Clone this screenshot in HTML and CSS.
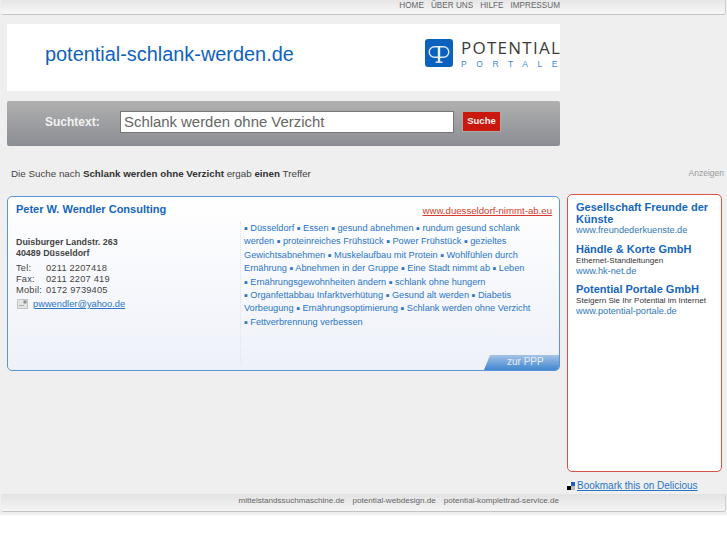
FILE: index.html
```html
<!DOCTYPE html>
<html lang="de">
<head>
<meta charset="utf-8">
<title>potential-schlank-werden.de</title>
<link rel="stylesheet" href="styles.css">
</head>
<body>
<div class="page">
  <nav class="topbar">
    <div class="topnav">
      <a href="#">HOME</a><a href="#">ÜBER UNS</a><a href="#">HILFE</a><a href="#">IMPRESSUM</a>
    </div>
  </nav>
  <div class="layout">
    <div class="main">
      <header class="brand">
        <div class="site-name">potential-schlank-werden.de</div>
        <div class="logo">
          <svg class="logo-mark" width="28" height="28" viewBox="0 0 28 28">
            <rect width="28" height="28" rx="3" fill="#0a62bd"/>
            <g fill="none" stroke="#dfe9f5" stroke-width="1.4">
              <path d="M13 7.7H9.5a5.2 5.2 0 0 0 0 10.6H13"/>
              <path d="M15 7.7h3.5a5.2 5.2 0 0 1 0 10.6H15"/>
              <path d="M10.5 23.2h7"/>
            </g>
            <rect x="12.8" y="7" width="2.4" height="16" fill="#eef3fa"/>
          </svg>
          <div class="logo-words">
            <div class="logo-top">POTENTIAL</div>
            <div class="logo-sub">PORTALE</div>
          </div>
        </div>
      </header>
      <form class="search">
        <label class="search-label">Suchtext:</label>
        <div class="search-input">Schlank werden ohne Verzicht</div>
        <div class="search-btn">Suche</div>
      </form>
      <p class="result-line">Die Suche nach <b>Schlank werden ohne Verzicht</b> ergab <b>einen</b> Treffer</p>
      <article class="card">
        <div class="card-left">
          <h2 class="card-title">Peter W. Wendler Consulting</h2>
          <div class="address"><b>Duisburger Landstr. 263<br>40489 Düsseldorf</b></div>
          <div class="contact"><span>Tel:</span><span>0211 2207418</span></div>
          <div class="contact"><span>Fax:</span><span>0211 2207 419</span></div>
          <div class="contact"><span>Mobil:</span><span>0172 9739405</span></div>
          <div class="mail">
            <svg class="mail-icon" width="11" height="10" viewBox="0 0 11 10">
              <rect x=".5" y=".5" width="10" height="9" fill="#e4e4e4" stroke="#c4c4c4"/>
              <rect x="6.5" y="1.5" width="3" height="3" fill="#8c8c8c"/>
              <rect x="2" y="6" width="5" height="1" fill="#aaa"/>
            </svg>
            <a href="#">pwwendler@yahoo.de</a>
          </div>
        </div>
        <div class="card-right">
          <div class="card-url"><a href="#">www.duesseldorf-nimmt-ab.eu</a></div>
          <div class="tags"><span class="b">▪</span> Düsseldorf <span class="b">▪</span> Essen <span class="b">▪</span> gesund abnehmen <span class="b">▪</span> rundum gesund schlank<br>werden <span class="b">▪</span> proteinreiches Frühstück <span class="b">▪</span> Power Frühstück <span class="b">▪</span> gezieltes<br>Gewichtsabnehmen <span class="b">▪</span> Muskelaufbau mit Protein <span class="b">▪</span> Wohlfühlen durch<br>Ernährung <span class="b">▪</span> Abnehmen in der Gruppe <span class="b">▪</span> Eine Stadt nimmt ab <span class="b">▪</span> Leben<br><span class="b">▪</span> Ernährungsgewohnheiten ändern <span class="b">▪</span> schlank ohne hungern<br><span class="b">▪</span> Organfettabbau Infarktverhütung <span class="b">▪</span> Gesund alt werden <span class="b">▪</span> Diabetis<br>Vorbeugung <span class="b">▪</span> Ernährungsoptimierung <span class="b">▪</span> Schlank werden ohne Verzicht<br><span class="b">▪</span> Fettverbrennung verbessen</div>
        </div>
        <a class="ppp" href="#">zur PPP</a>
      </article>
    </div>
    <aside class="side">
      <div class="ads-label">Anzeigen</div>
      <div class="ads">
        <div class="ad">
          <div class="ad-title">Gesellschaft Freunde der Künste</div>
          <div class="ad-url">www.freundederkuenste.de</div>
        </div>
        <div class="ad">
          <div class="ad-title">Händle &amp; Korte GmbH</div>
          <div class="ad-text">Ethernet-Standleitungen</div>
          <div class="ad-url">www.hk-net.de</div>
        </div>
        <div class="ad">
          <div class="ad-title">Potential Portale GmbH</div>
          <div class="ad-text">Steigern Sie Ihr Potential im Internet</div>
          <div class="ad-url">www.potential-portale.de</div>
        </div>
      </div>
      <div class="bookmark">
        <svg width="8" height="8" viewBox="0 0 8 8"><rect x="4" width="4" height="4" fill="#1a5fc4"/><rect y="4" width="4" height="4" fill="#000"/><rect x="4" y="4" width="4" height="4" fill="#bbb"/><rect width="4" height="4" fill="#fff"/></svg>
        <a href="#">Bookmark this on Delicious</a>
      </div>
    </aside>
  </div>
  <footer class="bottombar">
    <div class="bottomnav">
      <a href="#">mittelstandssuchmaschine.de</a><a href="#">potential-webdesign.de</a><a href="#">potential-komplettrad-service.de</a>
    </div>
  </footer>
</div>
</body>
</html>
```

FILE: styles.css
```css
* { box-sizing: border-box; }
html, body { margin: 0; padding: 0; background: #fff; }
body { font-family: "Liberation Sans", Arial, sans-serif; font-size: 10px; color: #444; }
a { color: inherit; }

.page { width: 727px; height: 515px; background: #efefef; overflow: hidden; padding-left: 1px; }

.topbar {
  width: 725px; height: 15px;
  background: linear-gradient(#e6e6e6, #f7f7f7);
  border-bottom: 1px solid #c4c4c4;
  border-right: 1px solid #d0d0d0;
  border-bottom-right-radius: 3px;
  border-bottom-left-radius: 3px;
}
.topnav { width: 559px; display: flex; justify-content: flex-end; gap: 7px; line-height: 12px; font-size: 8.2px; color: #666; }
.topnav a { text-decoration: none; }

.layout { display: grid; grid-template-columns: 553px 155px; column-gap: 7px; padding: 9px 0 0 6px; height: 479px; }
.main { min-width: 0; }

.brand { height: 67px; background: #fff; display: flex; justify-content: space-between; padding: 17px 0 0 38px; }
.site-name { font-size: 19.9px; line-height: 26px; color: #0d63bc; }
.logo { display: flex; gap: 8px; align-items: flex-start; width: 135px; margin-top: -2px; flex: none; }
.logo-mark { flex: none; }
.logo-top { font-family: "Open Sans", sans-serif; font-size: 17px; line-height: 17px; letter-spacing: 1.25px; color: #3b3b3b; white-space: nowrap; }
.logo-sub { font-size: 8.5px; line-height: 12px; letter-spacing: 9.6px; color: #3f88d6; white-space: nowrap; margin-top: 2px; }

.search {
  height: 45px; margin: 10px 0 0;
  background: linear-gradient(#b0b0b0, #8a8d93);
  border-radius: 2px;
  display: flex; align-items: flex-start;
  padding: 10px 0 0 38px;
}
.search-label { width: 75px; font-size: 12px; font-weight: bold; color: #f2f2f2; line-height: 22px; }
.search-input {
  width: 334px; height: 22px;
  background: #fff; border: 1px solid #777;
  color: #666; font-size: 14.9px; line-height: 20px; padding-left: 3px; margin-right: 8px;
}
.search-btn {
  width: 39px; height: 21px;
  background: #c9190f; border: 1px solid #aaa;
  color: #f4f0f0; font-size: 9.5px; font-weight: bold; line-height: 17px; text-align: center;
}

.result-line { margin: 21px 0 0 4px; height: 14px; font-size: 9.8px; line-height: 14px; color: #444; white-space: nowrap; }
.result-line b { color: #333; }

.card {
  position: relative;
  height: 175px; margin-top: 15px;
  background: linear-gradient(#fff, #eef1f9);
  border: 1px solid #5b94d8;
  border-radius: 5px;
  display: flex;
  overflow: hidden;
}
.card-left { width: 232px; padding: 5px 0 0 8px; flex: none; }
.card-title { margin: 0; font-size: 11px; line-height: 15px; font-weight: bold; color: #1565bd; }
.address { margin-top: 20px; font-size: 8.9px; line-height: 11.3px; color: #444; }
.contact { display: flex; font-size: 9.3px; line-height: 11.2px; color: #444; letter-spacing: .02em; }
.address + .contact { margin-top: 3px; }
.contact span:first-child { width: 30px; }
.mail { display: flex; align-items: center; gap: 5px; margin-top: 2px; font-size: 9.3px; line-height: 12px; color: #2a75c8; }
.mail-icon { margin-left: 1px; flex: none; }

.card-right { flex: 1; min-width: 0; padding-right: 7px; }
.card-url { text-align: right; font-size: 9.65px; line-height: 13px; color: #d43a2d; margin-top: 7px; }
.tags { margin-top: 5px; height: 140px; padding-left: 3px; border-left: 1px dotted #dde1e9; font-size: 9.2px; line-height: 13.4px; color: #2a75c8; white-space: nowrap; }
.b { font-family: "DejaVu Sans", sans-serif; font-size: 5.5px; line-height: 0; vertical-align: 1.5px; }

.ppp {
  position: absolute; right: 0; bottom: 0;
  width: 75px; height: 15px;
  background: linear-gradient(#a5c3e6, #3f86d0);
  clip-path: polygon(6px 0, 100% 0, 100% 100%, 0 100%);
  color: #e3edf8; font-size: 10px; line-height: 13px; text-decoration: none; padding-left: 23px;
}

.side { min-width: 0; position: relative; }
.ads-label { position: absolute; right: -2px; top: 143px; font-size: 8.5px; line-height: 12px; color: #999; }
.ads {
  position: absolute; left: 0; top: 170px;
  width: 155px; height: 278px;
  background: #fff; border: 1px solid #d9534a; border-radius: 5px;
  padding: 6px 4px 0 8px;
}
.ad { margin-bottom: 6.5px; }
.ad-title { font-size: 11px; line-height: 12px; font-weight: bold; color: #1565bd; }
.ad-text { font-size: 8.1px; line-height: 11px; color: #333; white-space: nowrap; }
.ad-url { font-size: 9.2px; line-height: 11px; color: #2f78bd; white-space: nowrap; }

.bookmark { position: absolute; left: 0; top: 455px; display: flex; align-items: center; gap: 2px; font-size: 10px; line-height: 14px; color: #2a75c8; white-space: nowrap; }

.bottombar {
  width: 725px; height: 18px;
  position: relative;
  background: linear-gradient(#e2e2e2, #f5f5f5);
  border-bottom: 1px solid #c4c4c4;
  border-right: 1px solid #d0d0d0;
  border-radius: 0 0 3px 3px;
}
.bottomnav { width: 558px; display: flex; justify-content: flex-end; gap: 8px; font-size: 8.1px; line-height: 14px; color: #666; }
.bottomnav a { text-decoration: none; }
```
